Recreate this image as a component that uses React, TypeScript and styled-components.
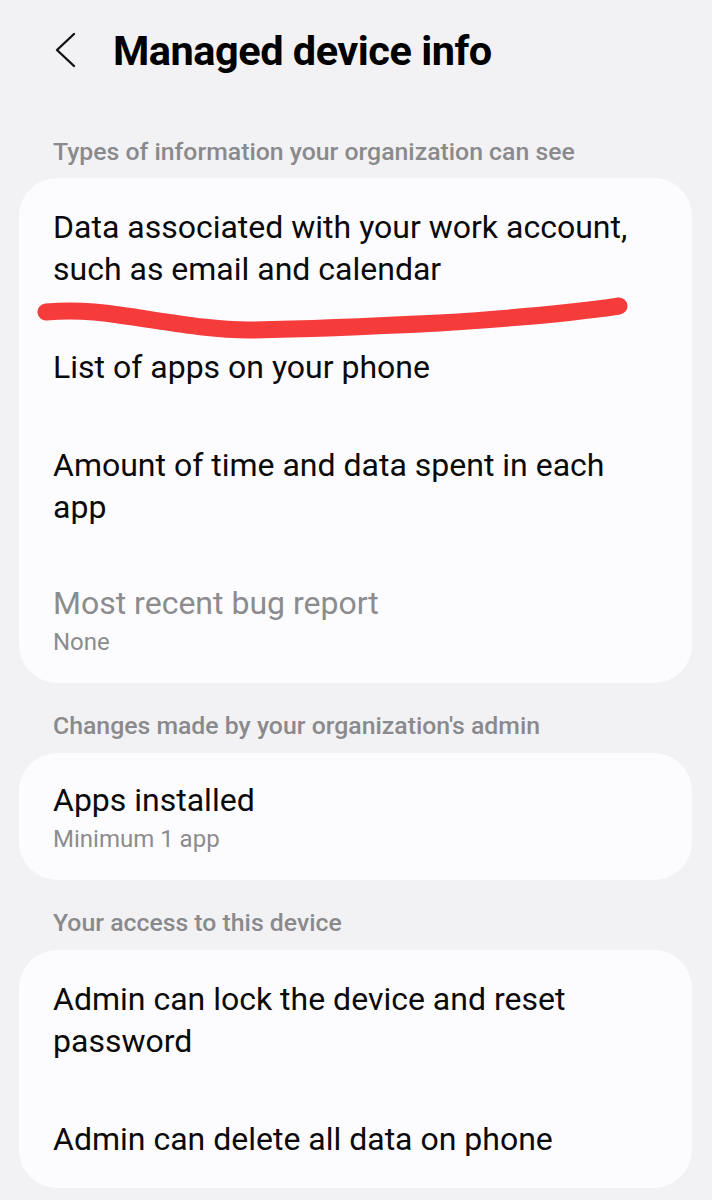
import React from 'react';
import styled, { createGlobalStyle } from 'styled-components';

const GlobalStyle = createGlobalStyle`
  html, body {
    margin: 0;
    padding: 0;
    background: #f2f2f4;
  }
  body {
    font-family: Roboto, "Liberation Sans", sans-serif;
    -webkit-font-smoothing: antialiased;
  }
`;

const Page = styled.div`
  width: 712px;
  min-height: 1200px;
  background: #f2f2f4;
  padding: 0 20px 40px 19px;
  box-sizing: border-box;
`;

const TopBar = styled.div`
  display: flex;
  align-items: center;
  height: 100px;
  padding-left: 34px;
  gap: 36px;
`;

const BackButton = styled.button`
  display: flex;
  align-items: center;
  justify-content: center;
  width: 24px;
  height: 40px;
  padding: 0;
  border: none;
  background: none;
`;

const Title = styled.h1`
  margin: 0;
  font-size: 41.5px;
  font-weight: 700;
  color: #000;
  letter-spacing: -0.5px;
`;

const SectionHeader = styled.div<{ $first?: boolean }>`
  padding: ${(p) => (p.$first ? '37px 34px 11px' : '28px 34px 12px')};
  font-size: 24.8px;
  line-height: 30px;
  font-weight: 500;
  color: #8a8a8c;
`;

const Card = styled.div`
  position: relative;
  background: #fcfcfe;
  border-radius: 38px;
  overflow: hidden;
`;

const Item = styled.div<{ $hasSub?: boolean }>`
  padding: ${(p) => (p.$hasSub ? '26px 34px 23px' : '28px 34px')};
`;

const ItemTitle = styled.div<{ $disabled?: boolean }>`
  font-size: 32px;
  line-height: 42px;
  color: ${(p) => (p.$disabled ? '#8c8c8e' : '#0a0a0a')};
`;

const ItemSub = styled.div`
  font-size: 24px;
  line-height: 36px;
  color: #8c8c8e;
`;

const Scribble = styled.svg`
  position: absolute;
  left: 0;
  top: 110px;
  pointer-events: none;
`;

const ChevronLeft = () => (
  <svg width="22" height="36" viewBox="0 0 22 36" fill="none">
    <path d="M20 2 L3 18 L20 34" stroke="#111" strokeWidth="2.4" strokeLinecap="round" strokeLinejoin="round" />
  </svg>
);

interface Entry {
  title: string;
  sub?: string;
  disabled?: boolean;
}

const sections: { header: string; items: Entry[] }[] = [
  {
    header: 'Types of information your organization can see',
    items: [
      { title: 'Data associated with your work account, such as email and calendar' },
      { title: 'List of apps on your phone' },
      { title: 'Amount of time and data spent in each app' },
      { title: 'Most recent bug report', sub: 'None', disabled: true },
    ],
  },
  {
    header: "Changes made by your organization's admin",
    items: [{ title: 'Apps installed', sub: 'Minimum 1 app' }],
  },
  {
    header: 'Your access to this device',
    items: [
      { title: 'Admin can lock the device and reset password' },
      { title: 'Admin can delete all data on phone' },
    ],
  },
];

export default function App() {
  return (
    <>
      <GlobalStyle />
      <Page>
        <TopBar>
          <BackButton aria-label="Back">
            <ChevronLeft />
          </BackButton>
          <Title>Managed device info</Title>
        </TopBar>

        {sections.map((section, i) => (
          <React.Fragment key={section.header}>
            <SectionHeader $first={i === 0}>{section.header}</SectionHeader>
            <Card>
              {section.items.map((item) => (
                <Item key={item.title} $hasSub={!!item.sub}>
                  <ItemTitle $disabled={item.disabled}>{item.title}</ItemTitle>
                  {item.sub && <ItemSub>{item.sub}</ItemSub>}
                </Item>
              ))}
              {i === 0 && (
                <Scribble width="640" height="60" viewBox="0 0 640 60">
                  <path
                    d="M27 24 C 50 22, 75 23, 100 27 C 150 34, 190 42, 230 42 C 300 41, 360 38, 420 35 C 500 30, 560 24, 600 18"
                    stroke="#f63b3b"
                    strokeWidth="17"
                    strokeLinecap="round"
                    fill="none"
                  />
                </Scribble>
              )}
            </Card>
          </React.Fragment>
        ))}
      </Page>
    </>
  );
}
